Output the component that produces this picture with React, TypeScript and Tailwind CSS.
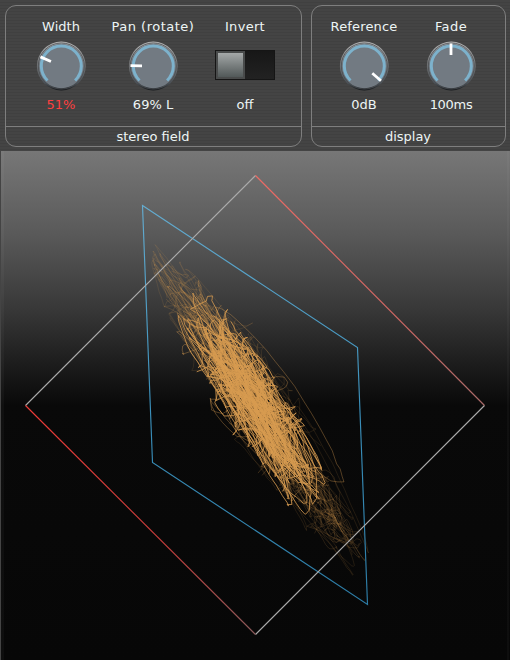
import React from "react";

function makeRandom(seed: number) {
  let s = seed;
  return () => {
    s = (s * 1664525 + 1013904223) >>> 0;
    return s / 4294967296;
  };
}

type Trace = { d: string; opacity: number };

// Swings back and forth along the diagonal axis of the stereo image.
function swing(rnd: () => number, mid: number, reach: number, girth: number, count: number) {
  const g = () => rnd() + rnd() - 1;
  let u0 = mid + g() * reach;
  let v0 = g() * girth;
  const pts: string[] = [];
  for (let i = 0; i < count; i++) {
    const u1 = mid + g() * reach;
    const v1 = g() * girth;
    const steps = 5 + Math.floor(Math.abs(u1 - u0) / 14);
    const bow = g() * 15;
    for (let k = 0; k < steps; k++) {
      const t = k / steps;
      const e = (1 - Math.cos(Math.PI * t)) / 2;
      const u = u0 + (u1 - u0) * e + g() * 3;
      const taper = Math.max(0.35, 1 - Math.pow(Math.abs(u) / 215, 2) * 0.6);
      const v = (v0 + (v1 - v0) * t + Math.sin(Math.PI * t) * bow + g() * 1.3) * taper;
      const x = 254 + u * 0.54 + v * 0.86;
      const y = 403 + u * 0.84 - v * 0.51;
      pts.push(`${x.toFixed(1)} ${y.toFixed(1)}`);
    }
    u0 = u1;
    v0 = v1;
  }
  return "M" + pts.join("L");
}

const rnd = makeRandom(4242);
const traces: Trace[] = [];
for (let i = 0; i < 12; i++) traces.push({ d: swing(rnd, 0, 205, 48, 12), opacity: 0.13 });
for (let i = 0; i < 6; i++) traces.push({ d: swing(rnd, -122, 72, 34, 7), opacity: 0.18 });
for (let i = 0; i < 10; i++) traces.push({ d: swing(rnd, 122, 80, 34, 8), opacity: 0.15 });
for (let i = 0; i < 10; i++) traces.push({ d: swing(rnd, -5, 150, 42, 10), opacity: 0.36 });
for (let i = 0; i < 20; i++) traces.push({ d: swing(rnd, 0, 134, 37, 13), opacity: 0.8 });

function Knob({ angle }: { angle: number }) {
  return (
    <svg className="block" width="50" height="50" viewBox="0 0 50 50">
      <defs>
        <linearGradient id="rim" x1="0" y1="0" x2="0" y2="1">
          <stop offset="0" stopColor="#b4b4b4" />
          <stop offset="0.5" stopColor="#707274" />
          <stop offset="0.85" stopColor="#4c5258" />
          <stop offset="1" stopColor="#15181b" />
        </linearGradient>
      </defs>
      <circle cx="25.3" cy="25" r="24.4" fill="url(#rim)" />
      <circle cx="25.3" cy="25" r="23" fill="none" stroke="#4a4e52" strokeWidth="0.8" />
      <circle cx="25.3" cy="25" r="22.3" fill="#727a82" />
      <path d="M11.5 39.5A20 20 0 1 1 39.1 39.5" fill="none" stroke="#7db2cc" strokeWidth="3" />
      <path d="M25 2.500V14" transform={`rotate(${angle} 25 25)`} stroke="#fff" strokeWidth="2.8" />
    </svg>
  );
}

type ControlProps = { label: string; value: string; labelClass?: string; valueClass?: string; children: React.ReactNode };

function Control({ label, value, labelClass = "", valueClass = "", children }: ControlProps) {
  return (
    <div className="flex flex-col items-center whitespace-nowrap">
      <div className={`h-4 leading-4 ${labelClass}`}>{label}</div>
      <div className="mt-[6px] flex h-[50px] items-center">{children}</div>
      <div className={`mt-[6px] h-4 leading-4 ${valueClass}`}>{value}</div>
    </div>
  );
}

function Panel({ title, className, children }: { title: string; className: string; children: React.ReactNode }) {
  return (
    <section className={`flex h-[142px] flex-col rounded-[11px] border border-[#7e7e7e] ${className}`}>
      <div className="flex h-[120px] justify-center pt-[13px]">{children}</div>
      <div className="h-5 border-t border-[#7e7e7e] pr-px text-center leading-[20px]">{title}</div>
    </section>
  );
}

function Scope() {
  return (
    <div className="h-[509px] border-l border-[#444] bg-[linear-gradient(180deg,#777_0,#5a5a5a_16%,#383838_31%,#1c1c1c_42%,#090909_50%,#070707_100%)]">
      <svg className="-ml-px block" width="510" height="509" viewBox="0 151 510 509">
        <defs>
          <linearGradient id="upperRed" gradientUnits="userSpaceOnUse" x1="255" y1="175" x2="485" y2="405">
            <stop offset="0" stopColor="#ee6a64" />
            <stop offset="0.6" stopColor="#cf6662" />
            <stop offset="1" stopColor="#a86a68" />
          </linearGradient>
          <linearGradient id="lowerRed" gradientUnits="userSpaceOnUse" x1="25" y1="405" x2="255" y2="635">
            <stop offset="0" stopColor="#f03a36" />
            <stop offset="0.6" stopColor="#c23c3a" />
            <stop offset="1" stopColor="#8a5a5a" />
          </linearGradient>
          <linearGradient id="blue" gradientUnits="userSpaceOnUse" x1="142" y1="205" x2="142" y2="605">
            <stop offset="0" stopColor="#64acd0" />
            <stop offset="0.5" stopColor="#3b90bb" />
            <stop offset="1" stopColor="#2c7ca6" />
          </linearGradient>
        </defs>
        <rect x="1" y="151" width="3" height="509" fill="#fff" opacity="0.03" />
        <rect x="507" y="151" width="2" height="509" fill="#fff" opacity="0.03" />
        <g fill="none" stroke="#d79b50" strokeWidth="1" strokeLinejoin="round">
          {traces.map((t, i) => (
            <path key={i} d={t.d} opacity={t.opacity} />
          ))}
        </g>
        <g fill="none" strokeWidth="1.15">
          <path d="M142.500 205.500L357.500 347.500L367.500 604.500L152.500 462.500Z" stroke="url(#blue)" />
          <path d="M25.500 405.500L255.500 175.500M484.500 405.500L255.500 634.500" stroke="#aaa" />
          <path d="M255.500 175.500L484.500 405.500" stroke="url(#upperRed)" />
          <path d="M25.500 405.500L255.500 634.500" stroke="url(#lowerRed)" />
        </g>
      </svg>
    </div>
  );
}

export default function App() {
  return (
    <main className="h-[660px] w-[510px] overflow-hidden bg-[#424242] font-['DejaVu_Sans',sans-serif] text-[13px] text-[#edf5f5]">
      <header className="flex h-[151px] gap-[9px] bg-[repeating-linear-gradient(180deg,#444_0_2px,#404040_2px_3px)] pt-[5px] pl-[5px]">
        <Panel title="stereo field" className="w-[297px]">
          <div className="-ml-px grid grid-cols-[92px_92px_92px]">
            <Control label="Width" value="51%" valueClass="text-[#ff4040]"><Knob angle={-66} /></Control>
            <Control label="Pan (rotate)" value="69% L" labelClass="tracking-[0.5px]"><Knob angle={-89} /></Control>
            <Control label="Invert" value="off" labelClass="tracking-[0.3px]">
              <div className="mb-[2px] flex h-[30px] w-[60px] border border-[#151515] bg-gradient-to-b from-[#171717] to-[#222]">
                <div className="h-7 w-[29px] border-2 border-[#494b4b] bg-gradient-to-b from-[#a5a9a9] to-[#525959]" />
              </div>
            </Control>
          </div>
        </Panel>
        <Panel title="display" className="w-[195px]">
          <div className="-ml-[2px] grid grid-cols-[87px_87px]">
            <Control label="Reference" value="0dB" labelClass="tracking-[0.15px]"><Knob angle={131} /></Control>
            <Control label="Fade" value="100ms" labelClass="tracking-[0.4px]" valueClass="tracking-[-0.3px]"><Knob angle={0} /></Control>
          </div>
        </Panel>
      </header>
      <Scope />
    </main>
  );
}
